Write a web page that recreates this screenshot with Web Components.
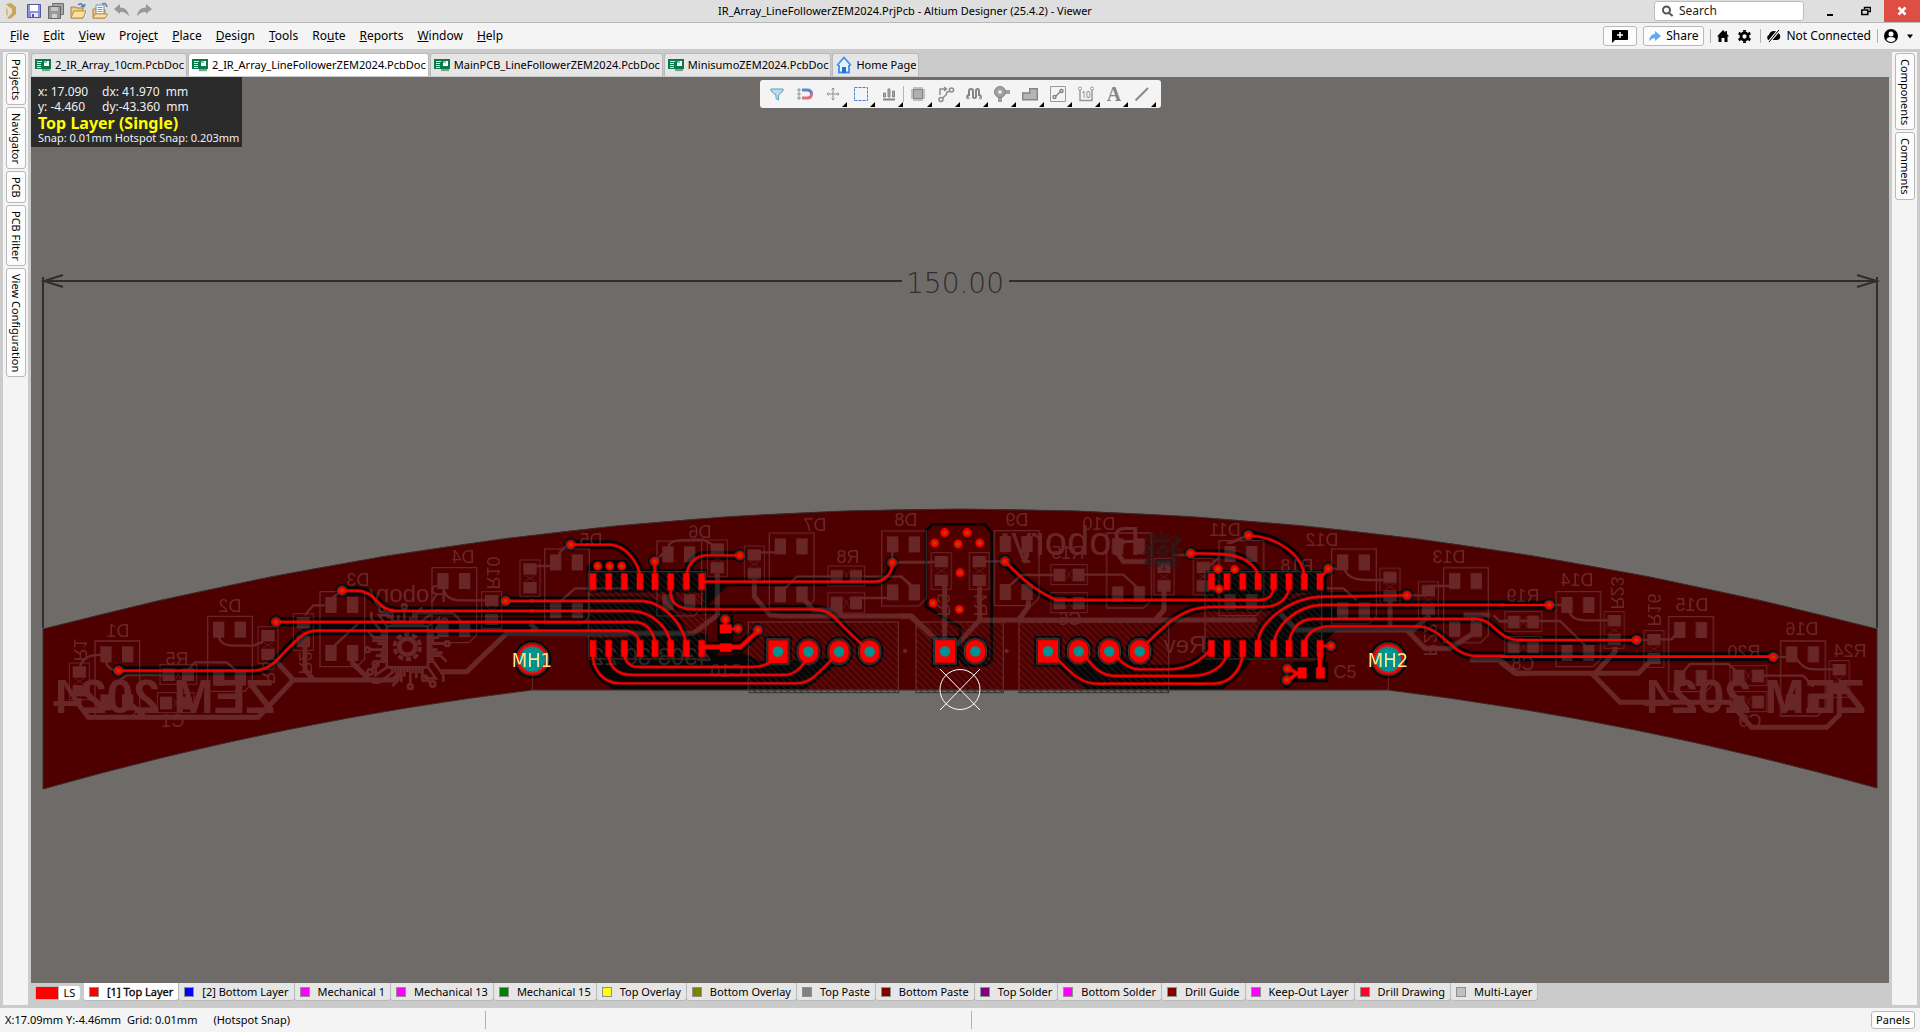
<!DOCTYPE html>
<html lang="en">
<head>
<meta charset="utf-8">
<title>IR_Array_LineFollowerZEM2024.PrjPcb - Altium Designer (25.4.2) - Viewer</title>
<style>
html,body{height:100%;margin:0}
body{font:12px/16px "Noto Sans","Open Sans",sans-serif;color:#000;background:#cbcbcb;overflow:hidden}
</style>
</head>
<body>
<altium-app></altium-app>
<script>
const base = `<style>
*{box-sizing:border-box}
button,input{font:inherit;color:inherit;margin:0}
button{border:0;background:none;padding:0;white-space:nowrap}
svg{display:block;flex:none}
</style>`;
function define(name, html, ready){
  const t = document.createElement('template');
  t.innerHTML = base + html;
  customElements.define(name, class extends HTMLElement{
    constructor(){
      super();
      this.attachShadow({mode:'open'}).appendChild(t.content.cloneNode(true));
    }
    connectedCallback(){ if(ready && !this.done){ this.done = true; ready(this, this.shadowRoot); } }
  });
}

/* ---------- title bar ---------- */
define('title-bar', `<style>
:host{display:grid;grid-template-columns:1fr auto 1fr;height:23px;background:#dfdfdf;border-bottom:1px solid #b9b9b9;align-items:center}
.q{display:flex;gap:6px;padding-left:4px}
h1{font:inherit;font-size:11px;margin:0;white-space:nowrap;padding-right:110px}
.r{display:flex;justify-content:flex-end;align-items:center;height:22px}
.s{display:flex;align-items:center;gap:6px;width:150px;height:20px;border:1px solid #bdbdbd;border-radius:3px;background:#fff;padding:0 7px}
.s input{border:0;outline:0;background:none;width:100%;padding:0;height:16px}
.s input::placeholder{color:#222;opacity:1}
.w{width:36px;height:22px;display:grid;place-items:center}
.w.first{margin-left:8px}
.x{background:#df4e43}
</style>
<div class="q">
<button aria-label="Altium"><svg width="16" height="18" viewBox="0 0 16 18"><path d="M2 2l5-1 5 4v7l-6 5-3-1 5-5V7L5 5z" fill="#c9a65a"/><path d="M2 5v8l2 1V8" fill="#d9bd7c"/></svg></button>
<button aria-label="Save"><svg width="16" height="18" viewBox="0 0 16 18"><path d="M1.500 2.500h13v13h-13z" fill="#8f93dd" stroke="#55589c"/><path d="M4 3h8v6H4z" fill="#fff"/><path d="M5 11h7v4H5z" fill="#e8e8f4"/><path d="M6 12h2v3H6z" fill="#55589c"/></svg></button>
<button aria-label="Save All"><svg width="16" height="18" viewBox="0 0 16 18"><path d="M4.500 1.500h11v11h-11z" fill="#a5a5a5" stroke="#707070"/><path d="M.500 4.500h12v12H.500z" fill="#999" stroke="#666"/><path d="M3 5h7v4H3z" fill="#c5c5c5"/><path d="M4 12h5v4H4z" fill="#d0d0d0"/></svg></button>
<button aria-label="Open"><svg width="16" height="18" viewBox="0 0 16 18"><path d="M1 5h5l1 1h6v10H1z" fill="#e9c987" stroke="#a98145"/><path d="M4 9h12l-3 7H1z" fill="#ffe0a0" stroke="#b98d4b"/><path d="M8 3q4-3 6 2m0 0l1-3m-1 3l-3-1" fill="none" stroke="#5d84a8" stroke-width="1.500"/></svg></button>
<button aria-label="Open Project"><svg width="16" height="18" viewBox="0 0 16 18"><path d="M1 7h5l1 1h6v8H1z" fill="#e9c987" stroke="#a98145"/><path d="M4 3h8v9H4z" fill="#fff" stroke="#6f8faf"/><path d="M5.500 5.500h5M5.500 7.500h5M5.500 9.500h5" stroke="#7896b4"/><path d="M3 12h13l-3 4H1z" fill="#ffe0a0" stroke="#b98d4b"/><path d="M10 2q4-2 5 3" fill="none" stroke="#5d84a8" stroke-width="1.500"/></svg></button>
<button aria-label="Undo"><svg width="16" height="18" viewBox="0 0 16 18"><path d="M0 7l6-5v3.500q8 0 9 9-3-5-9-4.500V12z" fill="#999"/></svg></button>
<button aria-label="Redo"><svg width="16" height="18" viewBox="0 0 16 18"><path d="M16 7l-6-5v3.500q-8 0-9 9 3-5 9-4.500V12z" fill="#999"/></svg></button>
</div>
<h1>IR_Array_LineFollowerZEM2024.PrjPcb - Altium Designer (25.4.2) - Viewer</h1>
<div class="r">
<label class="s"><svg width="11" height="12" viewBox="0 0 11 12"><circle cx="4.500" cy="5" r="3.500" fill="none" stroke="#555" stroke-width="2"/><path d="M7 8l3.500 3" stroke="#555" stroke-width="2"/></svg><input type="search" placeholder="Search" aria-label="Search"></label>
<button class="w first" aria-label="Minimize"><svg width="10" height="10"><path d="M2 8h6v2H2z"/></svg></button>
<button class="w" aria-label="Restore"><svg width="10" height="10" viewBox="0 0 10 10" fill="none" stroke="#000"><path d="M3.500 3V1.500h6v4H7" stroke-width="1.500"/><path d="M.800 4h6v4.500h-6z" stroke-width="1.500"/></svg></button>
<button class="w x" aria-label="Close"><svg width="10" height="10"><path d="M1.500 1.500l7 7m0-7l-7 7" stroke="#fff" stroke-width="2.500"/></svg></button>
</div>`);

/* ---------- menu bar ---------- */
define('menu-bar', `<style>
:host{display:flex;justify-content:space-between;align-items:center;height:26px;background:#f4f4f4;padding:0 7px 0 3px}
nav,.r{display:flex;align-items:center}
nav button{padding:0 7px}
.r{gap:6px}
.b{height:20px;border:1px solid #b8b8b8;border-radius:3px;background:#fcfcfc;display:flex;align-items:center;gap:5px;padding:0 5px}
.c{padding:0 7px}
i{width:1px;height:14px;background:#b0b0b0}
.n{display:flex;align-items:center;gap:5px}
.g{padding:0 3px}
</style>
<nav></nav>
<div class="r">
<button class="b c" aria-label="Comment"><svg width="18" height="14" viewBox="0 0 18 14"><path d="M2 1h14q1 0 1 1v8q0 1-1 1H4l-3 3V2q0-1 1-1z"/><path d="M9 3v6M6 6h6" stroke="#fff" stroke-width="1.500"/></svg></button>
<button class="b"><svg width="12" height="10" viewBox="0 0 12 10"><path d="M0 10q1-7 6-7V0l6 5-6 5V7Q3 7 0 10z" fill="#5babf5"/></svg>Share</button>
<i></i>
<button aria-label="Home"><svg width="12" height="12" viewBox="0 0 12 12"><path d="M6 0l2.500 2.500V1H10v3l2 2.500h-1.500V12h-3V8h-3v4h-3V6.500H0z"/></svg></button>
<button class="g" aria-label="Settings"><svg width="13" height="13" viewBox="-7 -7 14 14"><circle r="3.800" fill="none" stroke="#000" stroke-width="3"/><path d="M0-5v-2M0 5v2M4.300-2.500l2-1.200M-4.300 2.500l-2 1.200M4.300 2.500l2 1.200M-4.300-2.500l-2-1.200" stroke="#000" stroke-width="3"/></svg></button>
<i></i>
<button class="n"><svg width="14" height="12" viewBox="0 0 14 12"><path d="M1 10Q-1 6 2 5q1-4 5-4 3 0 4 2 3 1 2 5-1 2-3 2H4z"/><path d="M2 12L12 0" stroke="#f4f4f4" stroke-width="3"/><path d="M2 12L12 0" stroke="#000"/></svg>Not Connected</button>
<i></i>
<button class="n" aria-label="Account"><svg width="14" height="14" viewBox="0 0 14 14"><circle cx="7" cy="7" r="7"/><circle cx="7" cy="5" r="2.500" fill="#fff"/><path d="M2.500 11q0-3 4.500-3t4.500 3q-2 2-4.500 2t-4.500-2z" fill="#fff"/></svg><svg width="10" height="5" style="padding-left:4px" viewBox="0 0 6 4"><path d="M0 0h6L3 4z"/></svg></button>
</div>`, (h, r) => {
  const items = ['_File','_Edit','_View','Proje_ct','_Place','_Design','_Tools','Ro_ute','_Reports','_Window','_Help'];
  r.querySelector('nav').innerHTML = items.map(s => '<button>' + s.replace(/_(.)/, '<u>$1</u>') + '</button>').join('');
});

/* ---------- vertical docks ---------- */
define('side-dock', `<style>
:host{display:flex;flex-direction:column;gap:2px;width:25px;background:#f4f4f4;padding:1px 2px 0 3px;font-size:11px}
button{writing-mode:vertical-rl;width:20px;border:1px solid #b8b8b8;border-radius:3px;background:#fcfcfc;padding:5px 0 4px;line-height:18px}
</style>`, (h, r) => {
  h.getAttribute('tabs').split(',').forEach(s => { const b = document.createElement('button'); b.textContent = s; r.appendChild(b); });
});

/* ---------- document tabs ---------- */
define('doc-tab', `<style>
:host{display:block;font-size:11px}
button{height:24px;display:flex;align-items:center;gap:4px;padding:0 2px 0 3px;background:#e6e6e6;border:1px solid #b9b9b9;border-bottom-color:#cbcbcb;border-radius:3px 3px 0 0}
:host([active]) button{background:#fff}
.home{display:none}
:host([home]) .home{display:block}
:host([home]) .pcb{display:none}
</style>
<button><svg class="pcb" width="16" height="14" viewBox="0 0 16 14"><path d="M0 1h16v10H15v2H7v-2H0z" fill="#0a7a4c"/><path d="M2 3h5v1H2zM2 5h4v1H2zM2 7h4v1H2zM2 9h4v1H2z" fill="#d8efe4"/><path d="M9 3h5v5H9z" fill="#fff"/><path d="M9 3h3v2H9z" fill="#7fc7a5"/><path d="M8 11v3m2-3v3m2-3v3m2-3v3" stroke="#ded9a8"/></svg><svg class="home" width="16" height="18" viewBox="0 0 16 18"><path d="M3 9v7.500h10V9M1 9.500l7-8 7 8" fill="#e9f4ff" stroke="#3d8ff0" stroke-width="1.800"/><path d="M6 11h4v6H6z" fill="#1c73e0"/></svg><slot></slot></button>`);

/* ---------- heads-up display ---------- */
define('heads-up', `<style>
:host{display:block;width:211px;background:#2b2b2b;color:#f0f0f0;padding:7px 7px 1px;height:70px}
dl{display:grid;grid-template-columns:64px 1fr;margin:0;line-height:15px;white-space:pre}
b{display:block;color:#ff0;font-size:16px;line-height:18px}
small{display:block;font-size:11px;line-height:11px;white-space:nowrap}
</style>
<dl><span>x: 17.090</span><span>dx: 41.970  mm</span><span>y: -4.460</span><span>dy:-43.360  mm</span></dl>
<b>Top Layer (Single)</b><small>Snap: 0.01mm Hotspot Snap: 0.203mm</small>`);

/* ---------- active bar ---------- */
define('active-bar', `<style>
:host{display:flex;background:#f4f4f4;border-radius:3px;height:28px;padding:0 5px 0 3px}
button{width:28px;height:28px;position:relative;display:grid;place-items:center}
button.m::after{content:"";position:absolute;right:0;bottom:1px;border:solid transparent;border-width:0 0 5px 5px;border-bottom-color:#000}
i{width:1px;height:16px;margin-top:6px;background:#b5b5b5}
svg{overflow:visible}
</style>`, (h, r) => {
  const g = 'fill="none" stroke="#8d8d8d" stroke-width="1.500"';
  const icons = [
    ['Filter','<path d="M2 3h12v2L9.500 9v5L7 12.500V9L2 5z" fill="#b9dcec" stroke="#5f9fb8"/>',0],
    ['Snapping','<path d="M5 4h5q4.500 0 4.500 4" fill="none" stroke="#5c86d0" stroke-width="3"/><path d="M5 12h5q4.500 0 4.500-4" fill="none" stroke="#d9707c" stroke-width="3"/><g fill="#cfe0e4" stroke="#7f9aa0"><circle cx="2" cy="4" r="1.200"/><circle cx="2" cy="8" r="1.200"/><circle cx="2" cy="12" r="1.200"/></g>',0],
    ['Move',`<path d="M8 2v12M2 8h12M6.500 3.500L8 2l1.500 1.500M6.500 12.500L8 14l1.500-1.500M3.500 6.500L2 8l1.500 1.500M12.500 6.500L14 8l-1.500 1.500" fill="none" stroke="#8d8d8d"/>`,1],
    ['Select','<path d="M1.500 1.500h13v13h-13z" fill="none" stroke="#4d7ddb" stroke-dasharray="3 1"/>',1],
    ['Align','<path d="M2.500 7h2v4h-2zM7 3h2v8H7zM11.500 5h2v6h-2z" fill="#aaa" stroke="#858585"/><path d="M2 13.500h12" stroke="#858585" stroke-width="2"/>',1],
    ['Component','<path d="M4 1v14M6 1v14M8 1v14M10 1v14M12 1v14M1 4h14M1 6h14M1 8h14M1 10h14M1 12h14" stroke="#8d8d8d"/><path d="M3.500 3.500h9v9h-9z" fill="#b0b0b0" stroke="#858585"/>',1],
    ['Route',`<g ${g}><circle cx="3" cy="13.500" r="2"/><circle cx="13.500" cy="4" r="2"/><path d="M4.500 12L8 9l1-3 3-1M2 9V3h6M6 1l2.500 2L6 5"/></g>`,1],
    ['Tune','<path d="M1 12q0-3 2-3V5q0-2 2-2t2 2v6q0 1 1.500 1t1.500-1V5q0-2 1.500-2T13 5v4q2 0 2 3" fill="none" stroke="#858585" stroke-width="2"/><circle cx="2" cy="12" r="1" fill="#fff" stroke="#858585"/><circle cx="14.500" cy="12" r="1" fill="#fff" stroke="#858585"/>',1],
    ['Pad','<circle cx="6" cy="6" r="5.500" fill="#a0a0a0" stroke="#858585"/><circle cx="6" cy="6" r="1.800" fill="#f0f0f0"/><path d="M11 5h5M11 7h5M5 11v5M7 11v5" stroke="#858585" stroke-width="1.500"/>',1],
    ['Polygon','<path d="M.700 7h7V2.700h7.600v11H.700z" fill="#b5b5b5" stroke="#858585" stroke-width="1.400"/>',1],
    ['Rule',`<path d="M.500.500h15v15H.500z" fill="none" stroke="#999"/><g fill="none" stroke="#858585" stroke-width="1.500"><circle cx="4.500" cy="11" r="1.500"/><circle cx="11.500" cy="5" r="1.500"/><path d="M6 10l4-4"/></g>`,1],
    ['Dimension','<path d="M2 3v11.500h12V3" fill="none" stroke="#999" stroke-width="1.500"/><circle cx="2" cy="2.500" r="1.500" fill="#fff" stroke="#999"/><circle cx="14" cy="2.500" r="1.500" fill="#fff" stroke="#999"/><text x="8" y="12" text-anchor="middle" font-size="8" fill="#777">10</text>',1],
    ['String','<text x="8" y="15" text-anchor="middle" font-family="Liberation Serif,serif" font-weight="bold" font-size="20" fill="#858585">A</text>',1],
    ['Line','<path d="M1.500 14.500L14 2" stroke="#8d8d8d" stroke-width="2.200"/>',1]];
  r.innerHTML += icons.map((i, n) => (n === 5 ? '<i></i>' : '') + `<button class="${i[2] ? 'm' : ''}" aria-label="${i[0]}"><svg width="16" height="16" viewBox="0 0 16 16">${i[1]}</svg></button>`).join('');
});

/* ---------- board drawing ----------
   Board geometry is kept in thirds of a pixel, in five sections,
   each with its own offset from the board's left corner. */
const SECT = {A:[0,0], B:[1500,0], C:[2610,-30], D:[3450,0], E:[4410,60]};
const TRACES = {
 A:['M265 512H665C730 512 745 470 790 430C815 405 830 392 860 392H1510','M738 366H1510','M936 272H980C1040 272 1040 333 1100 333H1510','M1427 303H1510'],
 B:['M0 303H330C400 303 468 380 468 440','M0 333H300C370 333 422 390 422 440','M0 366H310C350 366 375 395 375 440','M0 392H285C310 392 330 410 330 440',
    'M122 134H240C285 134 330 190 330 235','M374 184V235','M630 166H530C495 166 469 195 469 235','M515 245H1030C1060 245 1087 225 1087 188',
    'M422 250V280C422 310 450 328 490 328H850C900 328 915 355 940 380L1015 452',
    'M188 460C188 510 220 550 270 550H800C840 550 855 530 925 458','M236 460C236 500 260 525 305 525H760C790 525 810 510 835 470','M283 460C283 480 295 501 325 501H670C700 501 720 490 735 475',
    'M586 358V386H624','M515 438H630L684 390','M515 444H632L686 394'],
 C:['M315 214C360 260 400 300 468 330H1080C1105 330 1120 315 1120 290','M872 190C960 192 1000 190 1035 210C1060 225 1075 240 1075 265',
    'M740 460C800 400 850 351 930 351H1090C1140 351 1167 320 1167 290','M470 505C510 545 540 581 590 581H940C990 581 1028 540 1028 480',
    'M555 500C580 530 600 558 650 558H870C930 558 980 530 981 480','M650 500C670 525 690 538 720 538H800C850 538 900 520 933 475'],
 D:['M205 106C290 110 373 165 373 235','M236 440V420C236 370 330 290 430 290L681 286','M281 440C281 380 350 315 430 315H970','M327 440C327 400 350 357 400 357H890C940 357 950 420 1020 420H1030',
    'M373 440C373 400 410 379 450 379H710C790 379 810 468 890 468H970','M420 235L445 206','M417 440V510','M423 440V510','M425 438H452','M322 506L350 520L320 540','M326 503L354 520L324 543'],
 E:['M0 255H148','M60 360H410','M0 410H820']
};
const VIAS = {
 A:[[265,512],[738,366],[936,272],[1427,303]],
 B:[[122,134],[374,184],[630,166],[1087,188],[586,358],[624,386],[684,390]],
 C:[[315,214],[872,190],[1045,136]],
 D:[[681,286],[445,206],[453,438],[322,506],[320,540]],
 E:[[148,255],[410,360],[820,411]]
};
const BARE = {
 B:[[203,198],[239,198],[275,198]],
 C:[[134,128],[201,128],[104,159],[174,162],[239,159],[180,248],[99,339],[178,358],[954,237],[1004,238],[957,297]]
};
const COLS = {B:[189,236,283,330,375,422,469,515], D:[94,141,188,234,281,327,373,420]};
const SMD = {B:[[569,373,36,27],[569,430,36,26]], D:[[353,502,27,34],[408,502,27,34]]};
const HOLES = {B:[[744,455,1],[835,455],[927,455],[1019,455]], C:[[135,484,1],[226,484],[444,484,1],[536,484],[628,484],[719,484]]};
const CLEAR = {
 B:'M170 276V200L190 180H290L308 208H532V276ZM165 290H330L425 330L470 400H532V478H170V415H300L270 400H165ZM200 415H530V475H200ZM178 440L182 495L245 567H825L950 470L800 480L715 495L640 460H560V455ZM562 345H610V465H562ZM520 250H600L520 330Z',
 C:'M470 505L555 597H970L1048 520V500H920L860 540L740 540L650 500Z',
 D:'M78 210H440V278H350L250 310H72V278ZM236 430L290 330L380 300H470V390L430 430ZM80 415H436V478H80ZM338 485H445V547H338ZM312 500H330V565H312ZM70 470L-10 520V567H130L200 500V470Z'
};
const LEDS = {A:[[195,423],[533,349],[870,275],[1206,203]],B:[[44,147],[381,123],[718,99],[1055,93]],C:[[283,122],[620,129],[957,152]],D:[[455,147],[791,203]],E:[[168,215],[506,290],[842,363]]};
const RV = {A:[[118,489],[684,380],[790,341],[1355,275],[1470,180]],B:[[532,120],[643,138]],C:[[94,188],[208,188],[762,205],[880,205]],D:[[600,205],[715,245]],E:[[313,275],[432,332],[988,422]]};
const RH = {A:[[390,493],[382,578]],B:[[894,198],[894,278]],C:[[452,224],[452,308]],E:[[15,275],[15,350],[690,437],[690,515]]};
const WIDE = {
 A:'M147 595V615L175 652H685L790 540L735 480M790 540H1090L1110 520M300 610L345 652M825 430V510L850 538M968 475V490L1015 535M1230 515H1310L1430 400H1500',
 B:'M0 400H490L562 345V220M673 230V290L720 345L760 348H1145L1200 400M820 295L850 330H930V350M0 370L30 400',
 C:'M134 280V450M239 290V390L170 465M0 378H30L110 450M239 390H920M355 390L385 350V330M792 270V360L765 390M315 180V130M380 170V195L370 218M640 170L670 215H740',
 D:'M680 390L735 445H810L880 400V350M750 345L700 390H350L300 340M850 345H930M870 480H960L1010 520H1050M630 290V380M80 360H230',
 E:'M0 425L45 460H415L460 415M275 460L360 547H690L755 622H980L1018 585V500M345 380V395L285 460'
};
const THIN = {
 A:'M150 500C160 470 180 464 225 464M228 480C228 500 240 510 265 512M567 410C570 430 590 437 610 437H670L700 425M885 316H850L825 345M1240 265C1245 290 1260 301 1290 301H1370M910 440L985 370M460 525L495 487H590L630 520M265 545L290 525H400M905 295L936 272M1150 340H1270L1300 370',
 B:'M0 198H60M85 170C90 150 110 134 122 134M415 140C420 120 440 119 520 119L550 135M690 157H740M765 265L800 230H910M1087 188H1200M1000 230H1115L1150 265M970 294H1080M85 310L135 265H300M374 184L400 160M1087 188V140',
 C:'M0 216H120M240 214H315M325 290L365 255H460M540 254H670L720 300M820 195H872M980 160L1045 136M0 258L40 290',
 D:'M150 130L205 106M440 265H490L530 300M490 200C500 230 520 240 560 240H620M681 286H740M750 258H820M940 345L960 365H1000M445 206H490M75 210L120 170',
 E:'M205 270C215 295 230 301 260 301H330M0 303H180L265 385M480 358H515L535 335M410 360H460M550 455L570 432H685L710 455M820 411H860M148 255H190M890 415C905 440 920 448 945 448H1000M780 467H910L940 500'
};
/* section, centre x, baseline y, string, size, vertical */
const LABELS = [
 ['A',265,410,'D1'],['A',600,336,'D2'],['A',985,258,'D3'],['A',1298,188,'D4'],['A',440,495,'R5'],['A',428,682,'C1'],
 ['A',150,450,'R1',18,1],['A',715,520,'R6',18,1],['A',825,490,'R2',18,1],['A',1388,218,'R10',18,1],
 ['B',183,138,'D5'],['B',510,114,'D6'],['B',856,93,'D7'],['B',1127,77,'D8'],['B',953,188,'R8'],['B',590,530,'C10'],
 ['C',350,108,'D9'],['C',597,120,'D10'],['C',975,138,'D11'],['C',505,208,'R15'],['C',510,405,'C6'],['C',128,345,'R3',18,1],['C',240,345,'R4',18,1],['C',855,490,'Rev',24],
 ['D',425,138,'D12'],['D',808,190,'D13'],['D',350,215,'R18'],['D',750,420,'R22',18,1],['D',1030,305,'R19'],['D',1030,510,'C8'],
 ['E',232,197,'D14'],['E',575,272,'D15'],['E',906,345,'D16'],['E',350,220,'R23',18,1],['E',463,270,'R16',18,1],['E',733,415,'R20'],['E',1050,410,'R24'],['E',750,622,'C9']
];
define('pcb-board', `<style>
:host{display:block;width:100%;height:100%}
svg{width:100%;height:100%}
text{font-family:"Liberation Sans",sans-serif}
.dim{font-family:"DejaVu Sans Light","DejaVu Sans",sans-serif;font-weight:200}
.mh{font-family:"DejaVu Sans Condensed","Liberation Sans",sans-serif;font-size:20px;fill:#ffe68c}
</style>`, (h, r) => {
  const T = .33333;
  const each = (data, fn) => Object.keys(data).map(k => `<g transform="translate(${SECT[k]})">${fn(data[k], k)}</g>`).join('');
  const many = (data, fn) => each(data, l => l.map(fn).join(''));
  const scaled = s => `<g transform="translate(30 500) scale(${T})">${s}</g>`;
  const rect = (x,y,w,hh,extra='') => `<rect x="${x}" y="${y}" width="${w}" height="${hh}" ${extra}/>`;
  const line = (d,w) => `<path d="${d}" fill="none" stroke-width="${w}"/>`;
  const led = ([x,y]) => `<path d="M${x} ${y}h134v202l-23 23h-111z" fill="none" stroke-width="4"/>` + [[16,16],[81,16],[16,160],[81,160]].map(p => rect(x+p[0],y+p[1],34,48,'stroke="none"')).join('');
  const rv = ([x,y]) => rect(x,y,60,110,'fill="none" stroke-width="3"') + rect(x+10,y+10,40,34,'stroke="none"') + rect(x+10,y+66,40,34,'stroke="none"') + `<path d="M${x+15} ${y+46}l30 18m0-18l-30 18" stroke-width="2"/>`;
  const rh = ([x,y]) => rect(x,y,110,60,'fill="none" stroke-width="3"') + rect(x+8,y+12,36,38,'stroke="none"') + rect(x+66,y+12,36,38,'stroke="none"') + `<path d="M${x+46} ${y+15}l18 30m0-30l-18 30" stroke-width="2"/>`;
  const chipLogo = (x,y,s) => {
    let o = `<g transform="translate(${x} ${y}) scale(${s})" fill="none" stroke-width="8"><circle r="38" stroke-width="12" stroke-dasharray="16 8"/><circle r="24" stroke-width="14"/><rect x="-62" y="-62" width="124" height="124" rx="8"/>`;
    for(let i=0;i<4;i++) o += `<g transform="rotate(${i*90})"><path d="M-45-62V-85L-70-108M-36-62V-80M-27-62V-95M-18-62V-80M-9-62V-112M0-62V-76M9-62V-90M18-62V-106M27-62V-100L45-118M36-62V-80M45-62V-78L85-108H105M62-62L95-85V-60"/><circle cx="-76" cy="-112" r="8"/><circle cx="-9" cy="-120" r="7"/><circle cx="95" cy="-52" r="8"/></g>`;
    return o + '</g>';
  };
  const label = ([s,x,y,t,size=18,v]) => {
    const px = Math.round(30 + (SECT[s][0]+x)/3), py = Math.round(500 + (SECT[s][1]+y)/3);
    return v ? `<text transform="translate(${px} ${py}) scale(-1 1) rotate(-90)" y="6" text-anchor="middle" font-size="${size}">${t}</text>`
             : `<text transform="translate(${px} ${py}) scale(-1 1)" text-anchor="middle" font-size="${size}">${t}</text>`;
  };
  const flip = (x,y,size,t,w=400) => `<text transform="translate(${x} ${y}) scale(-1 1)" text-anchor="middle" font-size="${size}" font-weight="${w}">${t}</text>`;
  const hole = ([x,y,sq],g) => { const e = g*1;
    return sq ? rect(x-30-e,y-35-e,60+2*e,70+2*e) : rect(x-30-e,y-35-e,60+2*e,70+2*e,`rx="${30+e}"`); };
  const board = 'M43 629Q960 389 1877 629V788Q1633 720 1388 690H532Q287 720 43 789Z';

  r.innerHTML += `<svg viewBox="31 77 1858 906" role="img" aria-label="PCB layout">
<defs>
<pattern id="h" width="20" height="20" patternUnits="userSpaceOnUse"><path d="M-2-2L22 22M-2 18L2 22M18-2L22 2" stroke="#fff" stroke-width="2.500"/></pattern>
<pattern id="k" width="20" height="20" patternUnits="userSpaceOnUse"><path d="M-2-2L22 22" stroke="#222" stroke-width="3"/></pattern>
<clipPath id="c"><path d="${board}"/></clipPath>
</defs>
<g fill="none" stroke="#2e2e2e" stroke-width="2">
<path d="M43 277V628M1877 277V628M43 281H902M1009 281H1877M63 275L44 281l19 6M1857 275l20 6-20 6"/></g>
<text class="dim" x="955" y="293" text-anchor="middle" font-size="28" fill="#2e2e2e">150.00</text>
<path d="${board}" fill="#4e0000" stroke="#3a2a2a"/>
<g clip-path="url(#c)">${scaled(`
<g fill="none" stroke="#050505" stroke-width="27">${many(TRACES, d => `<path d="${d}"/>`)}</g>
<g fill="#050505">${each(CLEAR, d => `<path d="${d}"/>`)}
${many(VIAS, v => `<circle cx="${v[0]}" cy="${v[1]}" r="20"/>`)}
${many(HOLES, p => hole(p,11))}
${each(COLS, l => l.map(x => rect(x-18,212,36,66)+rect(x-18,413,36,66)).join(''))}
<circle cx="1507" cy="478" r="57"/><circle cx="4075" cy="478" r="57"/></g>
<g transform="translate(2610 -30)"><path d="M97 103H255L275 128V510L258 526H195L180 505V412L78 350V122Z" fill="none" stroke="#050505" stroke-width="8"/></g>`)}
<g opacity=".15" fill="#fff" stroke="#fff">${scaled(`
${many(LEDS, led)}${many(RV, rv)}${many(RH, rh)}
${each(WIDE, d => line(d,15))}${each(THIN, d => line(d,7))}
<g stroke-width="4">${rect(2155,366,450,220,'fill="url(#h)"')}${rect(2658,366,262,220,'fill="url(#h)"')}${rect(2967,366,449,220,'fill="url(#h)"')}
${rect(1675,215,352,262,'fill="url(#h)"')}${rect(3525,215,350,262,'fill="url(#h)"')}</g>
<path d="M1507 478V570M4075 478V570" stroke-width="3"/>
${chipLogo(1132,440,1)}
<circle cx="2625" cy="453" r="6"/><circle cx="2930" cy="453" r="6"/>`)}
<g stroke="none">${LABELS.map(label).join('')}
${flip(164,713,48,'ZEM 2024',700)}${flip(1755,713,48,'ZEM 2024',700)}
${flip(408,602,24,'Robory')}${flip(1076,555,40,'Robory')}${flip(651,665,24,'4303 30 22')}
<text x="1345" y="678" text-anchor="middle" font-size="18">C5</text></g></g>
${scaled(`<g stroke="#222" stroke-opacity=".8">${chipLogo(3398,153,.45)}</g>
<g fill="none" stroke="#3b3b3b" stroke-width="4">${many(VIAS, v => `<circle cx="${v[0]}" cy="${v[1]}" r="14"/>`)}${'<g>'+many(HOLES, p => hole(p,3))+'</g>'}<circle cx="1507" cy="478" r="49"/><circle cx="4075" cy="478" r="49"/></g>
<g fill="none" stroke="red" stroke-width="8">${many(TRACES, d => `<path d="${d}"/>`)}</g>
<g fill="red">${each(COLS, l => l.map(x => rect(x-10,220,20,50)+rect(x-10,420,20,51)).join(''))}
${many(SMD, p => rect(...p))}${many(HOLES, p => hole(p,0))}
${many(VIAS, v => `<circle cx="${v[0]}" cy="${v[1]}" r="12"/>`)}${many(BARE, v => `<circle cx="${v[0]}" cy="${v[1]}" r="13"/>`)}
<circle cx="1507" cy="478" r="47"/><circle cx="4075" cy="478" r="47"/></g>
<g fill="#009292">${many(HOLES, p => `<circle cx="${p[0]}" cy="${p[1]}" r="16"/>`)}<circle cx="1507" cy="478" r="38"/><circle cx="4075" cy="478" r="38"/></g>
<g fill="#866200">${many(VIAS, v => `<circle cx="${v[0]}" cy="${v[1]}" r="4"/>`)}${many(BARE, v => `<circle cx="${v[0]}" cy="${v[1]}" r="5"/>`)}</g>`)}
</g>
${scaled(`<g fill="url(#k)" stroke="#333" stroke-width="3">${rect(2158,569,448,9)}${rect(2658,569,262,9)}${rect(2967,569,449,9)}</g>`)}
<text class="mh" x="532" y="667" text-anchor="middle">MH1</text><text class="mh" x="1388" y="667" text-anchor="middle">MH2</text>
<g fill="none" stroke="#fff"><circle cx="960" cy="689.500" r="20"/><path d="M940 669l40 41m0-41l-40 41"/></g>
</svg>`;
});

/* ---------- layer tabs ---------- */
define('layer-tabs', `<style>
:host{display:flex;height:25px;padding-left:4px;align-items:flex-start}
.ls{display:flex;margin:3px 4px 0 0;height:14px}
.ls i{width:24px;background:red;border:1px solid #bbb}
.ls button{background:#fff;border-radius:0 3px 3px 0;width:21px;font-size:11px;line-height:14px}
.t{height:18px;display:flex;align-items:center;gap:8px;padding:0 5px;background:#e6e6e6;border:solid #b9b9b9;border-width:0 1px 1px 0;border-radius:0 0 3px 3px;font-size:11px}
.t i{width:10px;height:10px;border:1px solid #909090}
.t.on{background:#fff}
.on span{-webkit-text-stroke:.3px}
</style><div class="ls"><i></i><button>LS</button></div>`, (h, r) => {
  [['[1] Top Layer','#f00'],['[2] Bottom Layer','#00f'],['Mechanical 1','#f0f'],['Mechanical 13','#f0f'],['Mechanical 15','#008000'],['Top Overlay','#ff0'],['Bottom Overlay','#808000'],['Top Paste','#808080'],['Bottom Paste','#800000'],['Top Solder','#800080'],['Bottom Solder','#f0f'],['Drill Guide','#800000'],['Keep-Out Layer','#f0f'],['Drill Drawing','#ff002a'],['Multi-Layer','#c0c0c0']]
  .forEach(([n,c],i) => r.innerHTML += `<button class="t${i ? '' : ' on'}"><i style="background:${c}"></i><span>${n}</span></button>`);
});

define('status-bar', `<style>
:host{display:grid;grid-template-columns:486px 486px 1fr;height:24px;background:#f4f4f4;align-items:center;font-size:11px}
.a{display:flex;gap:6px;padding-left:5px;white-space:pre}
.a span:last-child{padding-left:10px}
div{height:18px;line-height:18px}
.a,.m{border-right:1px solid #b0b0b0}
.p{text-align:right;padding-right:5px}
button{height:18px;border:1px solid #b8b8b8;border-radius:3px;background:#fcfcfc;padding:0 4px;line-height:16px}
</style><div class="a"><span>X:17.09mm Y:-4.46mm</span><span>Grid: 0.01mm</span><span>(Hotspot Snap)</span></div><div class="m"></div><div class="p"><button>Panels</button></div>`);

define('altium-app', `<style>
:host{display:flex;flex-direction:column;height:100vh}
.mid{flex:1;display:flex;min-height:0;padding:0 3px}
side-dock{margin:3px 0}
main{flex:1;min-width:0;display:flex;flex-direction:column;padding:0 3px}
.tabs{display:flex;height:28px;padding-top:4px;gap:1px}
.view{flex:1;min-height:0;position:relative;background:#6f6b69}
heads-up{position:absolute;left:0;top:0}
.bar{position:absolute;left:0;right:0;top:3px;display:flex;justify-content:center}
</style>
<title-bar></title-bar><menu-bar></menu-bar>
<div class="mid">
<side-dock tabs="Projects,Navigator,PCB,PCB Filter,View Configuration"></side-dock>
<main>
<div class="tabs"><doc-tab>2_IR_Array_10cm.PcbDoc</doc-tab><doc-tab active>2_IR_Array_LineFollowerZEM2024.PcbDoc</doc-tab><doc-tab>MainPCB_LineFollowerZEM2024.PcbDoc</doc-tab><doc-tab>MinisumoZEM2024.PcbDoc</doc-tab><doc-tab home>Home Page</doc-tab></div>
<div class="view"><pcb-board></pcb-board><heads-up></heads-up><div class="bar"><active-bar></active-bar></div></div>
<layer-tabs></layer-tabs>
</main>
<side-dock tabs="Components,Comments"></side-dock>
</div>
<status-bar></status-bar>`);
</script>
</body>
</html>
